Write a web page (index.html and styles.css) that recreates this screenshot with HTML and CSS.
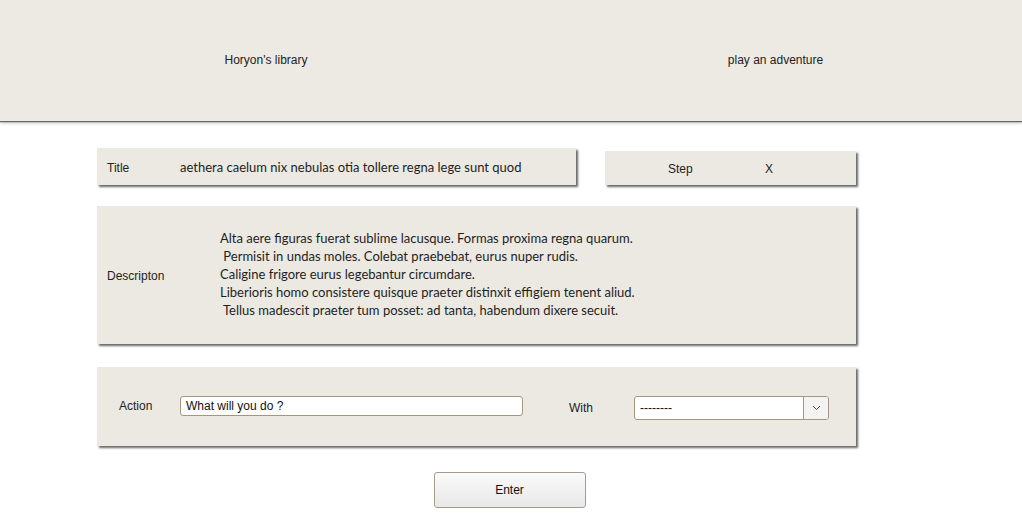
FILE: index.html
```html
<!DOCTYPE html>
<html>
<head>
<meta charset="utf-8">
<link rel="stylesheet" href="styles.css">
</head>
<body>
<header class="header">
  <div class="nav nav-left">Horyon's library</div>
  <div class="nav nav-right">play an adventure</div>
</header>
<main class="main">
  <div class="row-top">
    <div class="panel title-panel">
      <span class="label title-label">Title</span>
      <span class="lato">aethera caelum nix nebulas otia tollere regna lege sunt quod</span>
    </div>
    <div class="panel step-panel">
      <span class="label step-label">Step</span>
      <span class="label step-x">X</span>
    </div>
  </div>
  <div class="panel desc-panel">
    <span class="label desc-label">Descripton</span>
    <div class="lato desc-text">Alta aere figuras fuerat sublime lacusque. Formas proxima regna quarum.<br>&nbsp;Permisit in undas moles. Colebat praebebat, eurus nuper rudis.<br>Caligine frigore eurus legebantur circumdare.<br>Liberioris homo consistere quisque praeter distinxit effigiem tenent aliud.<br>&nbsp;Tellus madescit praeter tum posset: ad tanta, habendum dixere secuit.</div>
  </div>
  <div class="panel action-panel">
    <div class="field action-field">
      <span class="label action-label">Action</span>
      <div class="input">What will you do ?</div>
    </div>
    <div class="field with-field">
      <span class="label with-label">With</span>
      <div class="select">
        <span class="select-value">--------</span>
        <span class="select-btn"><svg width="9" height="6" viewBox="0 0 9 6"><path d="M1 1 L4.5 4.5 L8 1" fill="none" stroke="#444" stroke-width="1"/></svg></span>
      </div>
    </div>
  </div>
</main>
<div class="btn-row">
  <div class="button">Enter</div>
</div>
</body>
</html>
```
FILE: styles.css
```css
html, body {
  margin: 0;
  padding: 0;
  background: #ffffff;
  font-family: "Liberation Sans", Arial, sans-serif;
  font-size: 12px;
  color: #222222;
}
.header {
  display: flex;
  box-sizing: border-box;
  height: 121px;
  padding-bottom: 2px;
  background: #edeae4;
  box-shadow: 0 1px 1px #666, 0 2px 3px rgba(0,0,0,0.25);
  align-items: center;
}
.nav { text-align: center; }
.nav-left { width: 532px; }
.nav-right { width: 487px; }
.main {
  padding-left: 97px;
  width: 759px;
  display: flex;
  flex-direction: column;
}
.panel {
  background: #ece9e3;
  box-shadow: 2px 2px 2px rgba(0,0,0,0.6);
  display: flex;
  align-items: center;
}
.row-top {
  margin-top: 27px;
  display: flex;
  align-items: flex-end;
}
.label {
  font-family: "Liberation Sans", Arial, sans-serif;
  font-size: 12px;
  color: #222;
}
.lato {
  font-family: Lato, "Liberation Sans", sans-serif;
  font-size: 13px;
  color: #1e1e1e;
}
.title-panel {
  width: 469px;
  height: 37px;
  padding-left: 10px;
}
.title-label {
  width: 73px;
  flex-shrink: 0;
  padding-top: 3px;
}
.step-panel {
  margin-left: 29px;
  width: 188px;
  height: 34px;
  padding-left: 63px;
}
.step-label {
  width: 97px;
  flex-shrink: 0;
  padding-top: 2px;
}
.step-x { padding-top: 2px; }
.desc-panel {
  margin-top: 21px;
  height: 138px;
  padding-left: 10px;
}
.desc-label {
  width: 113px;
  flex-shrink: 0;
  padding-top: 2px;
}
.desc-text {
  line-height: 18px;
  padding-bottom: 2px;
}
.action-panel {
  margin-top: 23px;
  height: 50px;
  padding: 29px 0 0 22px;
  align-items: flex-start;
}
.field {
  display: flex;
  align-items: center;
}
.action-label { width: 61px; }
.input {
  box-sizing: border-box;
  width: 343px;
  height: 20px;
  background: #fff;
  border: 1px solid #a49685;
  border-radius: 3px;
  padding-left: 5px;
  line-height: 18px;
  color: #111;
}
.with-field { margin-left: 46px; }
.with-label { width: 65px; }
.select {
  box-sizing: border-box;
  width: 195px;
  height: 24px;
  background: #fff;
  border: 1px solid #a49685;
  border-radius: 3px;
  display: flex;
  color: #111;
}
.select-value {
  flex: 1;
  padding-left: 5px;
  line-height: 22px;
}
.select-btn {
  width: 24px;
  border-left: 1px solid #a49685;
  background: #f4f3f1;
  border-radius: 0 2px 2px 0;
  display: flex;
  align-items: center;
  justify-content: center;
}
.btn-row {
  display: flex;
  justify-content: center;
  margin-top: 26px;
  padding-right: 3px;
}
.button {
  box-sizing: border-box;
  width: 152px;
  height: 36px;
  border: 1px solid #a89a8a;
  border-radius: 3px;
  background: linear-gradient(#fafafa, #e8e8e8);
  display: flex;
  align-items: center;
  justify-content: center;
  color: #111;
}
```
